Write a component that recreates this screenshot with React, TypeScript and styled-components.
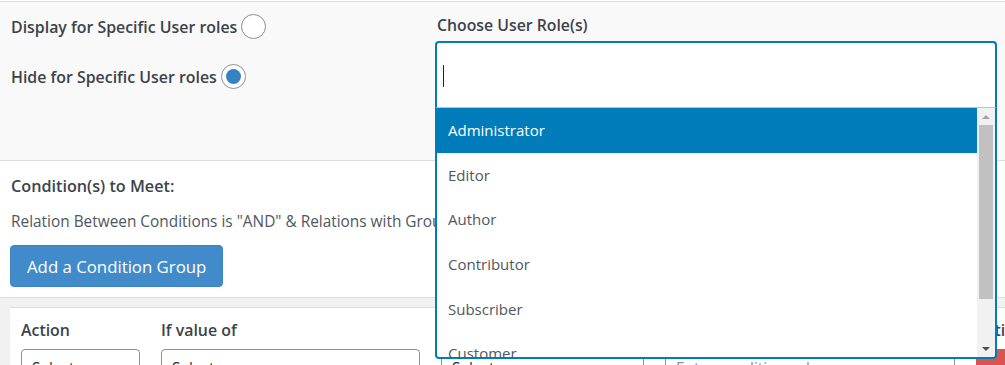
import styled, { createGlobalStyle } from "styled-components";

const GlobalStyle = createGlobalStyle`
  html, body {
    margin: 0;
    padding: 0;
  }
  body {
    background: #ffffff;
    font-family: "Open Sans", "Noto Sans", sans-serif;
    color: #3c434a;
  }
`;

const Page = styled.div`
  width: 1005px;
  height: 365px;
  overflow: hidden;
  background: #ffffff;
`;

const RoleSection = styled.section`
  display: grid;
  grid-template-columns: 435px 562px;
  box-sizing: border-box;
  height: 159px;
  margin-top: 1px;
  border-top: 1px solid #dcdcde;
  background: #f9f9f9;
`;

const RadioColumn = styled.div`
  display: flex;
  flex-direction: column;
  gap: 25px;
  padding: 12px 0 0 11px;
`;

const RadioRow = styled.label`
  display: flex;
  align-items: center;
  gap: 4px;
  font-size: 15.9px;
  font-weight: 600;
  color: #3c434a;
`;

const Radio = styled.span<{ $checked?: boolean }>`
  display: flex;
  align-items: center;
  justify-content: center;
  box-sizing: border-box;
  width: 25px;
  height: 25px;
  border: 1px solid #8c8f94;
  border-radius: 50%;
  background: #ffffff;

  &::after {
    content: "";
    display: ${(p) => (p.$checked ? "block" : "none")};
    width: 15px;
    height: 15px;
    border-radius: 50%;
    background: #3582c4;
  }
`;

const RoleColumn = styled.div`
  display: flex;
  flex-direction: column;
  padding-top: 13px;
`;

const FieldLabel = styled.div`
  padding-left: 2px;
  margin-bottom: 6px;
  font-size: 15.8px;
  font-weight: 600;
  line-height: 20px;
  color: #3c434a;
`;

const SelectBox = styled.div`
  position: relative;
  display: flex;
  align-items: center;
  box-sizing: border-box;
  width: 562px;
  height: 66px;
  padding-left: 6px;
  border: 2px solid #007cba;
  border-bottom: none;
  border-radius: 4px 4px 0 0;
  background: #ffffff;
`;

const Caret = styled.span`
  width: 1px;
  height: 22px;
  margin-top: 2px;
  background: #1d2327;
`;

const Dropdown = styled.div`
  position: absolute;
  z-index: 10;
  top: 100%;
  left: -2px;
  right: -2px;
  display: flex;
  box-sizing: border-box;
  height: 252px;
  border: 2px solid #007cba;
  border-top: 1px solid #9ecbe6;
  border-radius: 0 0 4px 4px;
  background: #ffffff;
  overflow: hidden;
`;

const OptionList = styled.ul`
  flex: 1;
  margin: 0;
  padding: 0;
  list-style: none;
`;

const Option = styled.li<{ $active?: boolean }>`
  display: flex;
  align-items: center;
  height: 44.6px;
  padding: 0 11px;
  font-size: 15px;
  color: ${(p) => (p.$active ? "#ffffff" : "#50575e")};
  background: ${(p) => (p.$active ? "#007cba" : "transparent")};
`;

const ScrollTrack = styled.div`
  display: flex;
  flex-direction: column;
  align-items: center;
  width: 18px;
  background: #f1f1f1;
`;

const ScrollArrow = styled.span<{ $down?: boolean }>`
  display: flex;
  align-items: center;
  justify-content: center;
  height: 17px;
  width: 100%;

  &::after {
    content: "";
    border-left: 4px solid transparent;
    border-right: 4px solid transparent;
    ${(p) =>
      p.$down
        ? "border-top: 4px solid #505050;"
        : "border-bottom: 4px solid #a3a3a3;"}
  }
`;

const ScrollThumb = styled.span`
  width: 14px;
  height: 174px;
  background: #c1c1c1;
`;

const ScrollSpacer = styled.span`
  flex: 1;
`;

const ConditionSection = styled.section`
  box-sizing: border-box;
  height: 137px;
  padding: 15px 11px 0;
  border-top: 1px solid #dcdcde;
  background: #ffffff;
`;

const SectionTitle = styled.div`
  font-size: 16.2px;
  font-weight: 600;
  line-height: 20px;
  color: #3c434a;
`;

const SectionText = styled.p`
  margin: 16px 0 0;
  font-size: 15.4px;
  line-height: 20px;
  color: #50575e;
  white-space: nowrap;
`;

const PrimaryButton = styled.button`
  display: block;
  box-sizing: border-box;
  height: 42px;
  margin: 13px 0 0 -1px;
  padding: 0 16px;
  border: 1px solid #3a84c4;
  border-radius: 4px;
  background: #428bca;
  color: #ffffff;
  font-family: inherit;
  font-size: 16.8px;
`;

const BottomArea = styled.section`
  box-sizing: border-box;
  height: 68px;
  padding: 9px 0 0 10px;
  border-top: 1px solid #dcdcde;
  background: #f1f1f1;
`;

const ConditionPanel = styled.div`
  display: grid;
  grid-template-columns: 119px 259px 203px 290px 1fr;
  column-gap: 21px;
  row-gap: 7px;
  box-sizing: border-box;
  height: 80px;
  padding: 12px 0 0 11px;
  border-top: 1px solid #dcdcde;
  background: #ffffff;
`;

const ColumnHead = styled.div`
  font-size: 15.9px;
  font-weight: 600;
  line-height: 20px;
  color: #3c434a;
  white-space: nowrap;
`;

const FakeSelect = styled.div<{ $muted?: boolean }>`
  box-sizing: border-box;
  height: 36px;
  padding: 8px 10px;
  border: 1px solid #8c8f94;
  border-radius: 4px;
  background: #ffffff;
  font-size: 15.4px;
  color: ${(p) => (p.$muted ? "#8c8f94" : "#2c3338")};
`;

const RemoveButton = styled.div`
  width: 40px;
  height: 36px;
  border-radius: 4px;
  background: #d9534f;
`;

const roles = [
  "Administrator",
  "Editor",
  "Author",
  "Contributor",
  "Subscriber",
  "Customer",
];

const App = () => {
  return (
    <Page>
      <GlobalStyle />
      <RoleSection>
        <RadioColumn>
          <RadioRow>
            Display for Specific User roles
            <Radio />
          </RadioRow>
          <RadioRow>
            Hide for Specific User roles
            <Radio $checked />
          </RadioRow>
        </RadioColumn>
        <RoleColumn>
          <FieldLabel>Choose User Role(s)</FieldLabel>
          <SelectBox>
            <Caret />
            <Dropdown>
              <OptionList>
                {roles.map((role, i) => (
                  <Option key={role} $active={i === 0}>
                    {role}
                  </Option>
                ))}
              </OptionList>
              <ScrollTrack>
                <ScrollArrow />
                <ScrollThumb />
                <ScrollSpacer />
                <ScrollArrow $down />
              </ScrollTrack>
            </Dropdown>
          </SelectBox>
        </RoleColumn>
      </RoleSection>
      <ConditionSection>
        <SectionTitle>Condition(s) to Meet:</SectionTitle>
        <SectionText>
          Relation Between Conditions is "AND" &amp; Relations with Groups is "OR"
        </SectionText>
        <PrimaryButton type="button">Add a Condition Group</PrimaryButton>
      </ConditionSection>
      <BottomArea>
        <ConditionPanel>
          <ColumnHead>Action</ColumnHead>
          <ColumnHead>If value of</ColumnHead>
          <ColumnHead>Is</ColumnHead>
          <ColumnHead>Value</ColumnHead>
          <ColumnHead>Actions</ColumnHead>
          <FakeSelect>Select...</FakeSelect>
          <FakeSelect>Select...</FakeSelect>
          <FakeSelect>Select...</FakeSelect>
          <FakeSelect $muted>Enter condition value</FakeSelect>
          <RemoveButton />
        </ConditionPanel>
      </BottomArea>
    </Page>
  );
};

export default App;
